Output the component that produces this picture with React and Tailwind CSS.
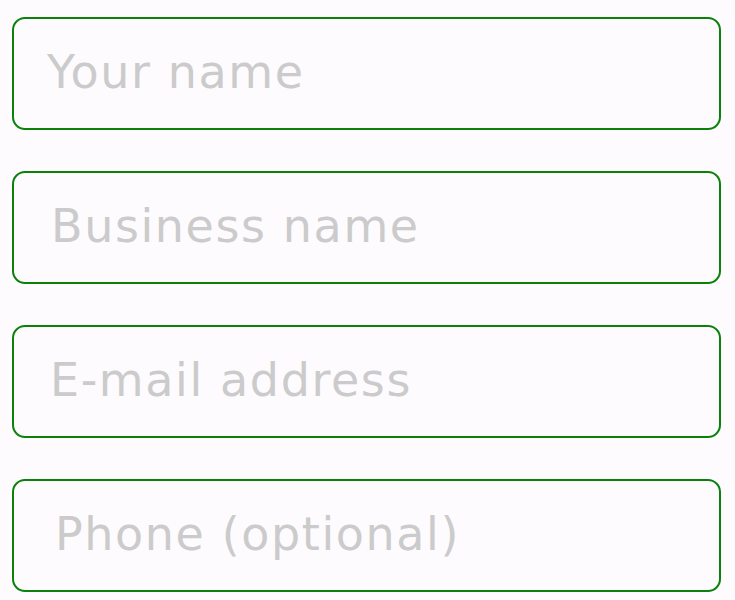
import { useState } from 'react';

const fields = [
  { name: 'name', placeholder: 'Your name', pad: 'pl-[33px]' },
  { name: 'business', placeholder: 'Business name', pad: 'pl-[37px]' },
  { name: 'email', placeholder: 'E-mail address', pad: 'pl-[36px]' },
  { name: 'phone', placeholder: 'Phone (optional)', pad: 'pl-[41px]' },
];

const App = () => {
  const [values, setValues] = useState({});

  return (
    <div className="min-h-screen w-[735px] bg-[#fdfbfe] pt-[17px] pl-3">
      <form className="flex flex-col gap-[41px]">
        {fields.map((f) => (
          <input
            key={f.name}
            name={f.name}
            value={values[f.name] || ''}
            onChange={(e) => setValues({ ...values, [f.name]: e.target.value })}
            placeholder={f.placeholder}
            className={`h-[113px] w-[709px] rounded-[13px] border-2 border-[#0a820a] bg-[#fdfbfe] ${f.pad} pr-4 pb-[3px] text-[46px] tracking-[1.6px] text-[#555] placeholder:text-[#cbcbcb] outline-none font-['DejaVu_Sans',sans-serif]`}
          />
        ))}
      </form>
    </div>
  );
};

export default App;
